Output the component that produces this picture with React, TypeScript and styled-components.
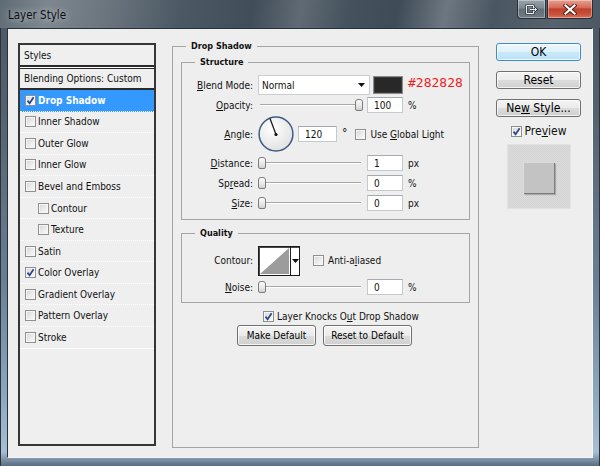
import React from "react";
import styled, { createGlobalStyle } from "styled-components";

const SANS = `"DejaVu Sans Condensed", "DejaVu Sans", "Liberation Sans", sans-serif`;

const GlobalStyle = createGlobalStyle`
  html, body { margin: 0; padding: 0; }
  body { font-family: ${SANS}; font-stretch: condensed; color: #111; }
  #root { width: 600px; height: 466px; overflow: hidden; }
`;

const Window = styled.div`
  width: 600px;
  height: 466px;
  box-sizing: border-box;
  display: flex;
  flex-direction: column;
  background: linear-gradient(180deg, #4a5661 0%, #56636f 25%, #6a7e93 60%, #8ea7c0 85%, #a8bed4 97%, #5a6b7e 100%);
  box-shadow: inset 1px 0 0 #2a333c, inset -1px 0 0 #2a333c;
`;

const TitleBar = styled.div`
  height: 28px;
  flex: none;
  display: flex;
  align-items: flex-start;
  padding-left: 8px;
  background: linear-gradient(100deg, #5f6b75 0%, #7c878f 8%, #6a757e 18%, #4c5863 30%, #414d58 42%, #5f6a74 50%, #45515c 58%, #3f4b56 66%, #6c7781 74%, #4a5661 82%, #56626c 92%, #4c5863 100%);
`;

const Title = styled.div`
  margin-top: 8px;
  font-size: 11.5px;
  line-height: 14px;
  color: #0d1014;
  text-shadow: 0 0 6px rgba(255, 255, 255, 0.55), 0 0 10px rgba(255, 255, 255, 0.35);
`;

const CaptionButtons = styled.div`
  margin-left: auto;
  margin-right: 7px;
  display: flex;
  gap: 1px;
`;

const CaptionButton = styled.div<{ $w: number; $close?: boolean }>`
  width: ${(p) => p.$w}px;
  height: 19px;
  box-sizing: border-box;
  border: 1px solid #27303a;
  border-top: none;
  border-radius: ${(p) => (p.$close ? "0 0 4px 0" : "0 0 0 4px")};
  display: flex;
  align-items: center;
  justify-content: center;
  background: ${(p) =>
    p.$close
      ? "linear-gradient(180deg, #e6a192 0%, #d56a58 42%, #c0402b 50%, #c8523c 80%, #d9745e 100%)"
      : "linear-gradient(180deg, #9aa3ab 0%, #7d8790 45%, #646e78 50%, #6f7a84 100%)"};
  box-shadow: inset 0 0 0 1px rgba(255, 255, 255, 0.35);
`;

const Client = styled.div`
  flex: 1;
  margin: 0 7px 8px 7px;
  box-sizing: border-box;
  border: 1px solid;
  border-color: #27313b #f4f6f8 #f4f6f8 #27313b;
  background: #eeeeee;
  display: flex;
  align-items: flex-start;
  padding-left: 10px;
`;

/* ---------- Styles list ---------- */

const StylesList = styled.div`
  margin-top: 14px;
  width: 138px;
  height: 403px;
  box-sizing: border-box;
  flex: none;
  border: 2px solid #363636;
  background: #efefef;
  display: flex;
  flex-direction: column;
  font-size: 10px;
`;

const ListHeader = styled.div`
  height: 20px;
  flex: none;
  display: flex;
  align-items: center;
  padding-left: 4px;
  border-bottom: 2px solid #2b2b2b;
`;

const BlendingRow = styled.div`
  height: 19px;
  flex: none;
  margin-top: 1px;
  display: flex;
  align-items: center;
  padding-left: 4px;
  border-top: 1px solid #2b2b2b;
  border-bottom: 2px solid #2b2b2b;
  box-shadow: 0 -1px 0 #fff;
`;

const StyleRow = styled.div<{ $selected?: boolean; $indent?: boolean }>`
  height: 21.55px;
  box-sizing: border-box;
  flex: none;
  display: flex;
  align-items: center;
  gap: 2px;
  padding-left: ${(p) => (p.$indent ? 18 : 5)}px;
  border-bottom: 1px dotted #ffffff;
  background: ${(p) => (p.$selected ? "#3399ff" : "transparent")};
  color: ${(p) => (p.$selected ? "#ffffff" : "#111")};
  font-weight: ${(p) => (p.$selected ? "bold" : "normal")};
  &:last-child {
    border-bottom-style: solid;
  }
`;

/* ---------- Check box ---------- */

const CheckBoxFrame = styled.span`
  width: 11px;
  height: 11px;
  box-sizing: border-box;
  flex: none;
  display: inline-flex;
  align-items: center;
  justify-content: center;
  border: 1px solid #8e8f8f;
  background: linear-gradient(135deg, #d4d4d4 0%, #ececec 55%, #fbfbfb 100%);
  box-shadow: inset 0 0 0 1px #f6f6f6;
`;

function CheckBox({ checked }: { checked?: boolean }) {
  return (
    <CheckBoxFrame>
      {checked && (
        <svg width="9" height="9" viewBox="0 0 9 9">
          <path d="M1.5 4.6 L3.6 7.2 L7.6 1.2" stroke="#27468c" strokeWidth="1.7" fill="none" />
        </svg>
      )}
    </CheckBoxFrame>
  );
}

/* ---------- Group boxes ---------- */

const Group = styled.fieldset<{ $w: number; $h?: number; $mt: number; $ml?: number }>`
  margin: ${(p) => p.$mt}px 0 0 ${(p) => p.$ml ?? 0}px;
  width: ${(p) => p.$w}px;
  ${(p) => (p.$h ? `height: ${p.$h}px;` : "")}
  box-sizing: border-box;
  padding: 0;
  min-width: 0;
  flex: none;
  border: 1px solid #a4a4a4;
  font-size: 10px;
`;

const GroupTitle = styled.legend`
  margin-left: 13px;
  padding: 0 5px;
  font-size: 9px;
  font-weight: bold;
  line-height: 12px;
`;

const GroupBody = styled.div<{ $pt: number; $pb: number; $px?: number }>`
  padding: ${(p) => p.$pt}px ${(p) => p.$px ?? 0}px ${(p) => p.$pb}px;
  display: flex;
  flex-direction: column;
`;

const Row = styled.div<{ $h: number }>`
  height: ${(p) => p.$h}px;
  display: flex;
  align-items: center;
  flex: none;
`;

const Label = styled.span`
  width: 71px;
  flex: none;
  margin-right: 5px;
  text-align: right;
  white-space: nowrap;
`;

const Key = styled.u`
  text-decoration: underline;
  text-underline-offset: 1px;
`;

const SelectBox = styled.div`
  width: 112px;
  height: 20px;
  box-sizing: border-box;
  flex: none;
  display: flex;
  align-items: center;
  padding: 0 4px 0 3px;
  background: #ffffff;
  border: 1px solid #c9ced4;
  & > svg {
    margin-left: auto;
  }
`;

const Swatch = styled.div`
  width: 30px;
  height: 18px;
  margin-left: 3px;
  box-sizing: border-box;
  flex: none;
  background: #282828;
  border: 1px solid #8a8a8a;
  box-shadow: inset 0 0 0 1px #3a3a3a;
`;

const HexText = styled.span`
  margin-left: 5px;
  margin-bottom: 5px;
  font-family: "DejaVu Sans Mono", "Liberation Mono", monospace;
  font-stretch: normal;
  font-size: 13px;
  color: #f21b1b;
`;

const SliderTrack = styled.div`
  position: relative;
  width: 105px;
  height: 12px;
  flex: none;
  &::before {
    content: "";
    position: absolute;
    left: 2px;
    right: 2px;
    top: 5px;
    height: 1px;
    background: #a9a9a9;
    box-shadow: 0 1px 0 #ffffff;
  }
`;

const SliderThumb = styled.div<{ $pos: number }>`
  position: absolute;
  top: 0;
  left: ${(p) => p.$pos}px;
  width: 8px;
  height: 12px;
  box-sizing: border-box;
  border: 1px solid #7c7c7c;
  border-radius: 3px 3px 2px 2px;
  background: linear-gradient(180deg, #fbfbfb 0%, #e6e6e6 60%, #d2d2d2 100%);
`;

function Slider({ value, max }: { value: number; max: number }) {
  const pos = Math.round((value / max) * 97);
  return (
    <SliderTrack>
      <SliderThumb $pos={pos} />
    </SliderTrack>
  );
}

const Field = styled.div<{ $w: number; $ml: number }>`
  width: ${(p) => p.$w}px;
  height: 16px;
  margin-left: ${(p) => p.$ml}px;
  box-sizing: border-box;
  flex: none;
  display: flex;
  align-items: center;
  padding-left: 6px;
  background: #ffffff;
  border: 1px solid #c3c9cf;
  border-top-color: #a3aab1;
`;

const Unit = styled.span<{ $ml?: number }>`
  margin-left: ${(p) => p.$ml ?? 5}px;
`;

const Degree = styled.span`
  margin-left: 5px;
  font-size: 12px;
  align-self: flex-start;
  margin-top: 11px;
`;

const InlineCheck = styled.label<{ $ml: number }>`
  margin-left: ${(p) => p.$ml}px;
  display: flex;
  align-items: center;
  gap: 4px;
  white-space: nowrap;
`;

const ContourPicker = styled.div`
  width: 42px;
  height: 30px;
  box-sizing: border-box;
  flex: none;
  display: flex;
  border: 1px solid #1b1b1b;
  box-shadow: inset 1px 1px 0 #4a4a4a;
  background: #ffffff;
`;

const ContourDrop = styled.div`
  flex: 1;
  display: flex;
  align-items: center;
  justify-content: center;
  border-left: 1px solid #1b1b1b;
`;

const KnockRow = styled.div`
  margin-top: 7px;
  height: 13px;
  padding-left: 82px;
  display: flex;
  align-items: center;
  gap: 3px;
  white-space: nowrap;
`;

const DefaultRow = styled.div`
  margin-top: 2px;
  padding-left: 56px;
  display: flex;
  gap: 7px;
`;

const Button = styled.button<{ $w: number; $h: number; $fs: number; $primary?: boolean }>`
  width: ${(p) => p.$w}px;
  height: ${(p) => p.$h}px;
  box-sizing: border-box;
  padding: 0;
  flex: none;
  font: inherit;
  font-size: ${(p) => p.$fs}px;
  color: #000;
  border: 1px solid ${(p) => (p.$primary ? "#3c8ac6" : "#707070")};
  border-radius: 3px;
  background: ${(p) =>
    p.$primary
      ? "linear-gradient(180deg, #eef8fe 0%, #ddf1fc 50%, #c9e9fb 52%, #b9e1f8 100%)"
      : "linear-gradient(180deg, #f4f4f4 0%, #ebebeb 50%, #dcdcdc 52%, #cfcfcf 100%)"};
  box-shadow: inset 0 0 0 1px rgba(255, 255, 255, 0.75);
  display: flex;
  align-items: center;
  justify-content: center;
`;

/* ---------- Right column ---------- */

const SideColumn = styled.div`
  margin: 14px 0 0 17px;
  width: 85px;
  flex: none;
  display: flex;
  flex-direction: column;
  align-items: center;
  gap: 10px;
`;

const PreviewToggle = styled.label`
  margin-top: -2px;
  height: 12px;
  display: flex;
  align-items: center;
  gap: 3px;
  font-size: 12px;
`;

const PreviewBox = styled.div`
  margin-top: -3px;
  width: 64px;
  height: 65px;
  box-sizing: border-box;
  border: 1px solid #e2e2e2;
  background: repeating-conic-gradient(#d3d3d3 0 25%, #dcdcdc 0 50%) 0 0 / 2px 2px;
  padding: 17px 0 0 15px;
`;

const PreviewSquare = styled.div`
  width: 31px;
  height: 31px;
  box-sizing: border-box;
  background: #c3c3c3;
  border-top: 1px solid #dddddd;
  border-left: 1px solid #dddddd;
  box-shadow: 1px 1px 0 #7e7e7e, 2px 2px 1px rgba(0, 0, 0, 0.22);
`;

const layerStyles = [
  { label: "Drop Shadow", checked: true, selected: true },
  { label: "Inner Shadow" },
  { label: "Outer Glow" },
  { label: "Inner Glow" },
  { label: "Bevel and Emboss" },
  { label: "Contour", indent: true },
  { label: "Texture", indent: true },
  { label: "Satin" },
  { label: "Color Overlay", checked: true },
  { label: "Gradient Overlay" },
  { label: "Pattern Overlay" },
  { label: "Stroke" },
];

const sizeRows = [
  { pre: "", key: "D", post: "istance:", value: 0, text: "1", unit: "px" },
  { pre: "Sp", key: "r", post: "ead:", value: 0, text: "0", unit: "%" },
  { pre: "", key: "S", post: "ize:", value: 0, text: "0", unit: "px" },
];

function ArrowDown() {
  return (
    <svg width="7" height="4" viewBox="0 0 7 4">
      <path d="M0 0 H7 L3.5 4 Z" fill="#111" />
    </svg>
  );
}

export default function App() {
  return (
    <>
      <GlobalStyle />
      <Window>
        <TitleBar>
          <Title>Layer Style</Title>
          <CaptionButtons>
            <CaptionButton $w={29}>
              <svg width="13" height="11" viewBox="0 0 13 11">
                <path d="M1.5 1.5 H8.5 V9.5 H1.5 Z" fill="none" stroke="#2b333b" strokeWidth="2.2" />
                <path d="M1.5 1.5 H8.5 V9.5 H1.5 Z" fill="none" stroke="#eef1f3" strokeWidth="1" />
                <path d="M5 5.5 H11.5 M9.5 3.5 L11.5 5.5 L9.5 7.5" fill="none" stroke="#2b333b" strokeWidth="2.2" />
                <path d="M5 5.5 H11.5 M9.5 3.5 L11.5 5.5 L9.5 7.5" fill="none" stroke="#eef1f3" strokeWidth="1" />
              </svg>
            </CaptionButton>
            <CaptionButton $w={46} $close>
              <svg width="14" height="11" viewBox="0 0 14 11">
                <path d="M2.5 1.5 L11.5 9.5 M11.5 1.5 L2.5 9.5" stroke="#4a1b14" strokeWidth="4" strokeLinecap="square" />
                <path d="M2.5 1.5 L11.5 9.5 M11.5 1.5 L2.5 9.5" stroke="#ffffff" strokeWidth="2.2" strokeLinecap="square" />
              </svg>
            </CaptionButton>
          </CaptionButtons>
        </TitleBar>

        <Client>
          <StylesList>
            <ListHeader>Styles</ListHeader>
            <BlendingRow>Blending Options: Custom</BlendingRow>
            {layerStyles.map((s) => (
              <StyleRow key={s.label} $selected={s.selected} $indent={s.indent}>
                <CheckBox checked={s.checked} />
                <span>{s.label}</span>
              </StyleRow>
            ))}
          </StylesList>

          <Group $w={307} $h={408} $mt={11} $ml={16}>
            <GroupTitle>Drop Shadow</GroupTitle>
            <GroupBody $pt={0} $pb={0} $px={8}>
              <Group $w={289} $mt={4}>
                <GroupTitle>Structure</GroupTitle>
                <GroupBody $pt={7} $pb={6}>
                  <Row $h={20}>
                    <Label>
                      <Key>B</Key>lend Mode:
                    </Label>
                    <SelectBox>
                      <span>Normal</span>
                      <ArrowDown />
                    </SelectBox>
                    <Swatch />
                    <HexText>#282828</HexText>
                  </Row>
                  <Row $h={20}>
                    <Label>
                      <Key>O</Key>pacity:
                    </Label>
                    <Slider value={100} max={100} />
                    <Field $w={36} $ml={4}>100</Field>
                    <Unit>%</Unit>
                  </Row>
                  <Row $h={38}>
                    <Label>
                      <Key>A</Key>ngle:
                    </Label>
                    <svg width="36" height="36" viewBox="0 0 36 36">
                      <defs>
                        <radialGradient id="dialFill" cx="40%" cy="35%" r="70%">
                          <stop offset="0" stopColor="#ffffff" />
                          <stop offset="1" stopColor="#e0e0e0" />
                        </radialGradient>
                      </defs>
                      <circle cx="18" cy="18" r="16.9" fill="url(#dialFill)" stroke="#3f5a84" strokeWidth="1.5" />
                      <line x1="18" y1="18.5" x2="12" y2="2.6" stroke="#1a1a1a" strokeWidth="1.3" />
                      <circle cx="18" cy="18.5" r="1.6" fill="#111" />
                    </svg>
                    <Field $w={39} $ml={4}>120</Field>
                    <Degree>°</Degree>
                    <InlineCheck $ml={8}>
                      <CheckBox />
                      <span>
                        Use <Key>G</Key>lobal Light
                      </span>
                    </InlineCheck>
                  </Row>
                  {sizeRows.map((r) => (
                    <Row $h={20} key={r.post}>
                      <Label>
                        {r.pre}
                        <Key>{r.key}</Key>
                        {r.post}
                      </Label>
                      <Slider value={r.value} max={100} />
                      <Field $w={36} $ml={4}>{r.text}</Field>
                      <Unit>{r.unit}</Unit>
                    </Row>
                  ))}
                </GroupBody>
              </Group>

              <Group $w={289} $mt={7}>
                <GroupTitle>Quality</GroupTitle>
                <GroupBody $pt={6} $pb={4}>
                  <Row $h={31}>
                    <Label>Contour:</Label>
                    <ContourPicker>
                      <svg width="31" height="28" viewBox="0 0 31 28">
                        <path d="M1 27 L30 1 V27 Z" fill="#9c9c9c" />
                      </svg>
                      <ContourDrop>
                        <ArrowDown />
                      </ContourDrop>
                    </ContourPicker>
                    <InlineCheck $ml={13}>
                      <CheckBox />
                      <span>
                        Anti-a<Key>l</Key>iased
                      </span>
                    </InlineCheck>
                  </Row>
                  <Row $h={22}>
                    <Label>
                      <Key>N</Key>oise:
                    </Label>
                    <Slider value={0} max={100} />
                    <Field $w={36} $ml={4}>0</Field>
                    <Unit>%</Unit>
                  </Row>
                </GroupBody>
              </Group>

              <KnockRow>
                <CheckBox checked />
                <span>
                  Layer Knocks O<Key>u</Key>t Drop Shadow
                </span>
              </KnockRow>
              <DefaultRow>
                <Button $w={79} $h={21} $fs={10}>Make Default</Button>
                <Button $w={89} $h={21} $fs={10}>Reset to Default</Button>
              </DefaultRow>
            </GroupBody>
          </Group>

          <SideColumn>
            <Button $w={85} $h={18} $fs={12} $primary>OK</Button>
            <Button $w={85} $h={18} $fs={12}>Reset</Button>
            <Button $w={85} $h={18} $fs={12}>
              <span>
                Ne<Key>w</Key> Style...
              </span>
            </Button>
            <PreviewToggle>
              <CheckBox checked />
              <span>
                Pre<Key>v</Key>iew
              </span>
            </PreviewToggle>
            <PreviewBox>
              <PreviewSquare />
            </PreviewBox>
          </SideColumn>
        </Client>
      </Window>
    </>
  );
}
